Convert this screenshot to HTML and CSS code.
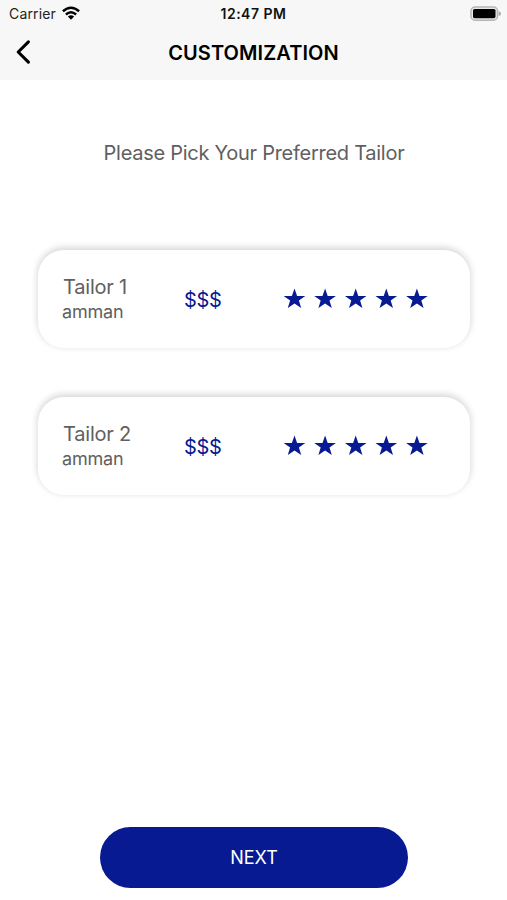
FILE: index.html
```html
<!DOCTYPE html>
<html lang="en">
<head>
<meta charset="utf-8">
<title>Customization</title>
<link rel="stylesheet" href="styles.css">
</head>
<body>
<svg class="defs" width="0" height="0"><defs>
<symbol id="stars" viewBox="0 0 146 22">
<path id="star" d="M11.5.4 14.1 7.9H22.3L15.9 12.5 18.2 20 11.5 15.5 4.8 20 7.1 12.5.7 7.9H8.9Z"/>
<use href="#star" x="30.6"/><use href="#star" x="61.2"/><use href="#star" x="91.8"/><use href="#star" x="122.4"/>
</symbol>
</defs></svg>
<header class="top">
<div class="status">
<div class="carrier"><span class="carrier-name">Carrier</span>
<svg class="wifi" width="18" height="14" viewBox="0 0 18 14"><g fill="none" stroke="#000" stroke-width="2.5"><path d="M.9 5.3Q9-1.7 17.1 5.3"/><path d="M3.9 8.5Q9 4.1 14.1 8.5"/></g><path d="M5.9 10.5Q9 8 12.1 10.5L9 13.7Z"/></svg></div>
<span class="time">12:47 PM</span>
<svg class="battery" width="32" height="16" viewBox="0 0 32 16"><rect x="2" y="1" width="26.5" height="13.2" rx="4" fill="#e8e8e8" stroke="#b5b5b5" stroke-width="1.5"/><rect x="4" y="3" width="22.5" height="9.2" rx="1.6"/><path d="M29.7 5Q32 6 32 7.6T29.7 10.2Z" fill="#a5a5a5"/></svg>
</div>
<nav class="nav">
<svg class="back" width="16" height="26" viewBox="0 0 16 26"><path d="M13.4 2.8 3.2 13 13.4 23.2" fill="none" stroke="#000" stroke-width="3.1" stroke-linecap="round" stroke-linejoin="round"/></svg>
<h1 class="title">CUSTOMIZATION</h1>
</nav>
</header>
<main class="content">
<h2 class="prompt">Please Pick Your Preferred Tailor</h2>
<section class="cards">
<article class="card"><div class="who"><div class="name">Tailor 1</div><div class="city">amman</div></div><span class="price">$$$</span><svg class="stars" width="146" height="22"><use href="#stars"/></svg></article>
<article class="card"><div class="who"><div class="name">Tailor 2</div><div class="city">amman</div></div><span class="price">$$$</span><svg class="stars" width="146" height="22"><use href="#stars"/></svg></article>
</section>
<button class="next">NEXT</button>
</main>
</body>
</html>
```
FILE: styles.css
```css
* { box-sizing: border-box; }
body { margin: 0; height: 900px; display: flex; flex-direction: column; overflow: hidden; background: #fff; color: #000; font-family: Inter, "Liberation Sans", sans-serif; white-space: nowrap; }
.defs { display: none; }
svg { display: block; flex: none; }
.top { height: 80px; background: #f7f7f7; }
.status { height: 27px; display: grid; grid-template-columns: 1fr auto 1fr; align-items: center; padding: 0 6px 0 9px; }
.carrier { display: flex; align-items: center; gap: 6px; font-size: 14px; color: #222; }
.carrier-name { letter-spacing: 0.15px; }
.wifi { margin-top: -2px; }
.time { font-size: 14px; font-weight: 600; letter-spacing: 0.5px; margin-left: -3px; color: #111; }
.battery { justify-self: end; }
.nav { height: 50px; display: grid; grid-template-columns: 40px 1fr 40px; align-items: center; padding: 0 15px; }
.title { margin: 1px 0 0; text-align: center; font-size: 20px; line-height: 24px; font-weight: 600; letter-spacing: 0.07px; }
.content { flex: 1; display: flex; flex-direction: column; align-items: center; padding: 60px 37px 12px 38px; }
.prompt { margin: 0; font-size: 20px; line-height: 26px; font-weight: 400; letter-spacing: -0.27px; color: #606060; }
.cards { width: 100%; margin-top: 84px; display: flex; flex-direction: column; gap: 49px; }
.card { height: 98px; display: flex; align-items: center; padding-left: 24px; border-radius: 26px; background: #fff; box-shadow: 0 -2px 6px 1px rgba(0, 0, 0, 0.15); }
.who { width: 122px; color: #606060; }
.name { font-size: 20px; line-height: 25px; letter-spacing: -0.2px; padding-left: 1px; }
.city { font-size: 18px; line-height: 23px; letter-spacing: -0.2px; }
.price { width: 99px; padding-top: 1px; font-size: 20px; letter-spacing: -0.3px; color: #071a92; }
.stars { fill: #071a92; }
.next { margin-top: auto; width: 308px; height: 61px; border: 0; border-radius: 31px; background: #071a92; color: #fff; font-family: inherit; font-size: 18px; }
```
